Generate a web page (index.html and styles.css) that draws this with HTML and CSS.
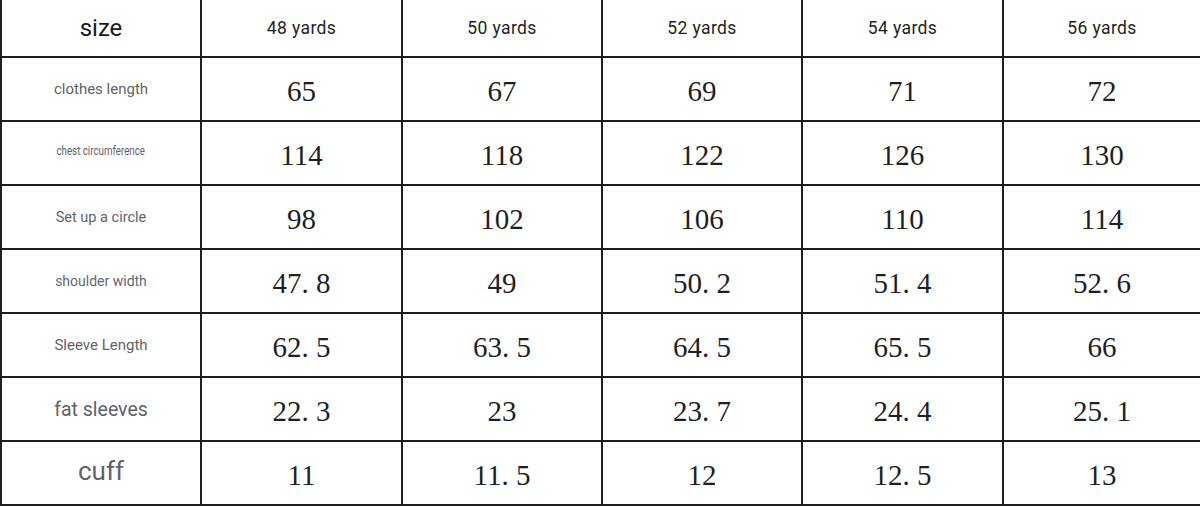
FILE: index.html
```html
<!DOCTYPE html>
<html lang="en">
<head>
<meta charset="utf-8">
<title>Size chart</title>
<link rel="stylesheet" href="styles.css">
</head>
<body>
<div class="sheet">
  <div class="cell head label-size">size</div>
  <div class="cell head">48 yards</div>
  <div class="cell head">50 yards</div>
  <div class="cell head">52 yards</div>
  <div class="cell head">54 yards</div>
  <div class="cell head last">56 yards</div>

  <div class="cell label l-clothes">clothes length</div>
  <div class="cell num">65</div>
  <div class="cell num">67</div>
  <div class="cell num">69</div>
  <div class="cell num">71</div>
  <div class="cell num last">72</div>

  <div class="cell label l-chest"><span class="cond">chest circumference</span></div>
  <div class="cell num">114</div>
  <div class="cell num">118</div>
  <div class="cell num">122</div>
  <div class="cell num">126</div>
  <div class="cell num last">130</div>

  <div class="cell label l-setup">Set up a circle</div>
  <div class="cell num">98</div>
  <div class="cell num">102</div>
  <div class="cell num">106</div>
  <div class="cell num">110</div>
  <div class="cell num last">114</div>

  <div class="cell label l-shoulder">shoulder width</div>
  <div class="cell num">47<span class="dot">.</span>8</div>
  <div class="cell num">49</div>
  <div class="cell num">50<span class="dot">.</span>2</div>
  <div class="cell num">51<span class="dot">.</span>4</div>
  <div class="cell num last">52<span class="dot">.</span>6</div>

  <div class="cell label l-sleeve">Sleeve Length</div>
  <div class="cell num">62<span class="dot">.</span>5</div>
  <div class="cell num">63<span class="dot">.</span>5</div>
  <div class="cell num">64<span class="dot">.</span>5</div>
  <div class="cell num">65<span class="dot">.</span>5</div>
  <div class="cell num last">66</div>

  <div class="cell label l-fat">fat sleeves</div>
  <div class="cell num">22<span class="dot">.</span>3</div>
  <div class="cell num">23</div>
  <div class="cell num">23<span class="dot">.</span>7</div>
  <div class="cell num">24<span class="dot">.</span>4</div>
  <div class="cell num last">25<span class="dot">.</span>1</div>

  <div class="cell label l-cuff">cuff</div>
  <div class="cell num">11</div>
  <div class="cell num">11<span class="dot">.</span>5</div>
  <div class="cell num">12</div>
  <div class="cell num">12<span class="dot">.</span>5</div>
  <div class="cell num last">13</div>
</div>
</body>
</html>
```

FILE: styles.css
```css
html, body {
  margin: 0;
  padding: 0;
  background: #ffffff;
  overflow: hidden;
}

.sheet {
  display: grid;
  grid-template-columns: 200px 201px 200px 200px 201px 196px;
  grid-template-rows: 58px repeat(7, 64px);
  border-left: 2px solid #1f1f1f;
  width: 1198px;
}

.cell {
  box-sizing: border-box;
  display: flex;
  align-items: center;
  justify-content: center;
  border-right: 2px solid #1f1f1f;
  border-bottom: 2px solid #1f1f1f;
  white-space: nowrap;
}

.cell.last {
  border-right: none;
}

.head {
  font-family: Roboto, "Liberation Sans", sans-serif;
  font-size: 17.5px;
  letter-spacing: 0.4px;
  color: #1f1f1f;
}

.label-size {
  font-size: 24px;
  letter-spacing: 0;
  color: #1a1a1a;
}

.label {
  font-family: Roboto, "Liberation Sans", sans-serif;
  color: #5f6368;
}

.l-clothes { font-size: 15px; }
.l-chest { font-size: 12.5px; }
.l-setup { font-size: 14.5px; }
.l-shoulder { font-size: 14px; color: #5d6a72; }
.l-sleeve { font-size: 15px; }
.l-fat { font-size: 19.5px; }
.l-cuff { font-size: 26px; padding-bottom: 4px; }

.cond {
  display: inline-block;
  transform: scaleX(0.78);
  padding-bottom: 6px;
}

.num {
  font-family: "Liberation Serif", "Times New Roman", serif;
  font-size: 29px;
  color: #1f1f1f;
  padding-top: 4px;
}

.dot {
  margin-right: 0.25em;
}
```
